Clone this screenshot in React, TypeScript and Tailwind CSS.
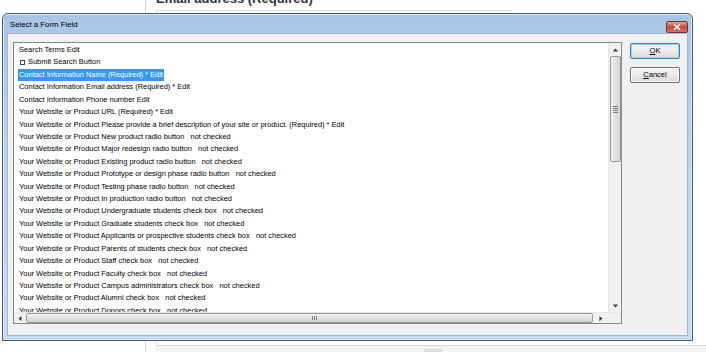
import React from 'react'

const items = [
  'Search Terms Edit',
  '__box__Submit Search Button',
  'Contact Information Name (Required) * Edit',
  'Contact Information Email address (Required) * Edit',
  'Contact Information Phone number Edit',
  'Your Website or Product URL (Required) * Edit',
  'Your Website or Product Please provide a brief description of your site or product. (Required) * Edit',
  'Your Website or Product New product radio button   not checked',
  'Your Website or Product Major redesign radio button   not checked',
  'Your Website or Product Existing product radio button   not checked',
  'Your Website or Product Prototype or design phase radio button   not checked',
  'Your Website or Product Testing phase radio button   not checked',
  'Your Website or Product In production radio button   not checked',
  'Your Website or Product Undergraduate students check box   not checked',
  'Your Website or Product Graduate students check box   not checked',
  'Your Website or Product Applicants or prospective students check box   not checked',
  'Your Website or Product Parents of students check box   not checked',
  'Your Website or Product Staff check box   not checked',
  'Your Website or Product Faculty check box   not checked',
  'Your Website or Product Campus administrators check box   not checked',
  'Your Website or Product Alumni check box   not checked',
  'Your Website or Product Donors check box   not checked',
]

function Arrow({ dir }: { dir: 'up' | 'down' | 'left' | 'right' }) {
  const pts = {
    up: '0,4 3.5,0 7,4',
    down: '0,0 3.5,4 7,0',
    left: '4,0 0,3.5 4,7',
    right: '0,0 4,3.5 0,7',
  }[dir]
  const vert = dir === 'up' || dir === 'down'
  return (
    <svg width={vert ? 7 : 4} height={vert ? 4 : 7} viewBox={vert ? '0 0 7 4' : '0 0 4 7'}>
      <polygon points={pts} fill="#3b3b3b" transform={vert ? 'scale(0.75) translate(1.2,0.6)' : 'scale(0.75) translate(0.6,1.2)'} />
    </svg>
  )
}

function DlgButton({ label, isDefault }: { label: string; isDefault?: boolean }) {
  return (
    <button
      className={`w-[50px] h-[16px] rounded-[2px] border bg-gradient-to-b from-[#f3f3f3] via-[#ebebeb] to-[#d9d9d9] text-[7.5px] leading-none text-black flex items-center justify-center ${
        isDefault ? 'border-[#3c7fb1] shadow-[inset_0_0_0_1px_#9fd3f2]' : 'border-[#707070] shadow-[inset_0_0_0_1px_#fafafa]'
      }`}
    >
      <span className="underline">{label[0]}</span>
      {label.slice(1)}
    </button>
  )
}

export default function App() {
  return (
    <div
      className="relative w-[706px] h-[352px] bg-white overflow-hidden"
      style={{ fontFamily: '"Liberation Sans", Arial, sans-serif' }}
    >
      {/* page behind the dialog */}
      <div className="flex h-full">
        <div className="w-[146px] h-full border-r border-[#d6d6d6]" />
        <div className="flex-1 flex flex-col pl-[10px]">
          <div className="-mt-[11px] h-[21px] text-[13px] font-bold text-[#333] leading-[20px]">
            Email address (Required)
          </div>
          <div className="w-[357px] flex-1 border-t border-l border-[#dcdcdc]" />
          <div className="h-[7px] border-t border-[#d8d8d8] bg-[#f3f3f3] flex">
            <div className="ml-[268px] mt-[3px] w-[18px] h-[4px] bg-[#dcdcdc]" />
          </div>
        </div>
      </div>

      {/* dialog window */}
      <div className="absolute left-[2px] top-[13px] w-[691px] h-[328px] rounded-t-[6px] border border-[#3f5f6f] bg-gradient-to-b from-[#a9c5e6] via-[#bed5ed] to-[#c7dbf0] shadow-[inset_0_0_0_1px_#dbe8f6] flex flex-col">
        {/* title bar */}
        <div className="h-[19px] flex items-center pl-[7px] pr-[4px]">
          <span className="text-[7.8px] text-black leading-none mt-[2px]">Select a Form Field</span>
          <div className="ml-auto mt-[6px] w-[22px] h-[12px] rounded-[2px] border border-[#6d3737] bg-gradient-to-b from-[#e4a593] via-[#c9463a] to-[#d47466] flex items-center justify-center">
            <svg width="8" height="6" viewBox="0 0 8 6">
              <path d="M1 0.5 L7 5.5 M7 0.5 L1 5.5" stroke="#fff" strokeWidth="1.6" />
            </svg>
          </div>
        </div>

        {/* client area */}
        <div className="mx-[4px] mb-[4px] flex-1 bg-[#f0f0f0] border border-[#a3b8cf] flex pt-[8px] pl-[5px]">
          {/* list box */}
          <div className="w-[609px] h-[282px] border border-[#828790] bg-white flex flex-col">
            <div className="flex flex-1 min-h-0">
              <div className="flex-1 overflow-hidden pt-[1px] text-[7.45px] text-black">
                {items.map((it, i) => (
                  <div key={i} className="h-[12.43px] leading-[12.43px] whitespace-pre pl-[4px]">
                    {it.startsWith('__box__') ? (
                      <span className="pl-[2px] inline-flex items-center">
                        <span className="inline-block w-[5px] h-[5px] border border-[#444] mr-[3px]" />
                        {it.slice(7)}
                      </span>
                    ) : (
                      <span className={`px-[1px] ${i === 2 ? 'bg-[#3399ff] text-white inline-block' : ''}`}>{it}</span>
                    )}
                  </div>
                ))}
              </div>
              {/* vertical scrollbar */}
              <div className="w-[13px] bg-[#f0f0f0] border-l border-[#e6e6e6] flex flex-col items-center">
                <div className="h-[13px] flex items-center justify-center">
                  <Arrow dir="up" />
                </div>
                <div className="w-[11px] h-[106px] rounded-[2px] border border-[#979797] bg-gradient-to-r from-[#f1f1f1] to-[#d3d3d3] flex items-center justify-center">
                  <div className="flex flex-col gap-[1px]">
                    <div className="w-[5px] h-[1px] bg-[#7f7f7f]" />
                    <div className="w-[5px] h-[1px] bg-[#7f7f7f]" />
                    <div className="w-[5px] h-[1px] bg-[#7f7f7f]" />
                    <div className="w-[5px] h-[1px] bg-[#7f7f7f]" />
                  </div>
                </div>
                <div className="flex-1" />
                <div className="h-[12px] flex items-center justify-center">
                  <Arrow dir="down" />
                </div>
              </div>
            </div>
            {/* horizontal scrollbar */}
            <div className="h-[11px] flex bg-[#f0f0f0] border-t border-[#e6e6e6]">
              <div className="w-[12px] flex items-center justify-center">
                <Arrow dir="left" />
              </div>
              <div className="w-[567px] h-[10px] rounded-[2px] border border-[#979797] bg-gradient-to-b from-[#f1f1f1] to-[#d3d3d3] flex items-center justify-center">
                <div className="flex gap-[1px] ml-[10px]">
                  <div className="w-[1px] h-[4px] bg-[#7f7f7f]" />
                  <div className="w-[1px] h-[4px] bg-[#7f7f7f]" />
                  <div className="w-[1px] h-[4px] bg-[#7f7f7f]" />
                </div>
              </div>
              <div className="flex-1 flex items-center justify-center">
                <Arrow dir="right" />
              </div>
              <div className="w-[13px] bg-[#f0f0f0]" />
            </div>
          </div>

          {/* buttons */}
          <div className="ml-[8px] pt-[1px] flex flex-col gap-[8px]">
            <DlgButton label="OK" isDefault />
            <DlgButton label="Cancel" />
          </div>
        </div>
      </div>
    </div>
  )
}
